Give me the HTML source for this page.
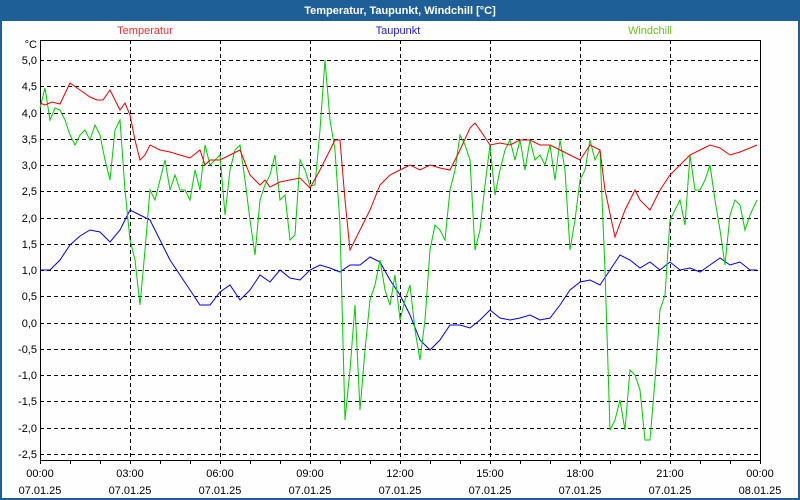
<!DOCTYPE html>
<html><head><meta charset="utf-8"><style>
html,body{margin:0;padding:0;background:#fff;}
svg{display:block;font-family:"Liberation Sans",sans-serif;}
</style></head><body>
<svg width="800" height="500" xmlns="http://www.w3.org/2000/svg">
<rect x="0" y="0" width="800" height="500" fill="#fdfefd"/>
<rect x="0" y="0" width="800" height="21" fill="#1d5f96"/>
<rect x="0" y="0" width="2" height="500" fill="#1d5f96"/>
<rect x="798" y="0" width="2" height="500" fill="#1d5f96"/>
<rect x="0" y="498" width="800" height="2" fill="#1d5f96"/>
<text x="400" y="14" fill="#fff" font-size="11" font-weight="bold" text-anchor="middle">Temperatur, Taupunkt, Windchill [°C]</text>
<text x="145" y="34" fill="#f03030" font-size="11" text-anchor="middle">Temperatur</text>
<text x="398" y="34" fill="#2020d0" font-size="11" text-anchor="middle">Taupunkt</text>
<text x="650" y="34" fill="#70c020" font-size="11" text-anchor="middle">Windchill</text>
<g stroke="#000" stroke-width="1" stroke-dasharray="4,3" fill="none">
<path d="M40 60.5H760M40 86.5H760M40 113.5H760M40 139.5H760M40 165.5H760M40 191.5H760M40 218.5H760M40 244.5H760M40 270.5H760M40 296.5H760M40 323.5H760M40 349.5H760M40 375.5H760M40 401.5H760M40 428.5H760M40 454.5H760"/>
<path d="M130.5 40V460M220.5 40V460M310.5 40V460M400.5 40V460M490.5 40V460M580.5 40V460M670.5 40V460"/>
</g>
<path d="M40.5 40.5H760.5V460.5H40.5Z" fill="none" stroke="#000" stroke-width="1"/>
<path d="M40.5 460V464M70.5 460V464M100.5 460V464M130.5 460V464M160.5 460V464M190.5 460V464M220.5 460V464M250.5 460V464M280.5 460V464M310.5 460V464M340.5 460V464M370.5 460V464M400.5 460V464M430.5 460V464M460.5 460V464M490.5 460V464M520.5 460V464M550.5 460V464M580.5 460V464M610.5 460V464M640.5 460V464M670.5 460V464M700.5 460V464M730.5 460V464M760.5 460V464" stroke="#000"/>
<g font-size="11" fill="#000" text-anchor="end">
<text x="37" y="48">°C</text>
<text x="37" y="64">5,0</text><text x="37" y="90">4,5</text><text x="37" y="117">4,0</text><text x="37" y="143">3,5</text><text x="37" y="169">3,0</text><text x="37" y="195">2,5</text><text x="37" y="222">2,0</text><text x="37" y="248">1,5</text><text x="37" y="274">1,0</text><text x="37" y="300">0,5</text><text x="37" y="327">0,0</text><text x="37" y="353">-0,5</text><text x="37" y="379">-1,0</text><text x="37" y="405">-1,5</text><text x="37" y="432">-2,0</text><text x="37" y="458">-2,5</text>
</g>
<g font-size="11" fill="#000" text-anchor="middle">
<text x="40" y="477">00:00</text><text x="40" y="494">07.01.25</text>
<text x="130" y="477">03:00</text><text x="130" y="494">07.01.25</text>
<text x="220" y="477">06:00</text><text x="220" y="494">07.01.25</text>
<text x="310" y="477">09:00</text><text x="310" y="494">07.01.25</text>
<text x="400" y="477">12:00</text><text x="400" y="494">07.01.25</text>
<text x="490" y="477">15:00</text><text x="490" y="494">07.01.25</text>
<text x="580" y="477">18:00</text><text x="580" y="494">07.01.25</text>
<text x="670" y="477">21:00</text><text x="670" y="494">07.01.25</text>
<text x="760" y="477">00:00</text><text x="760" y="494">08.01.25</text>
</g>
<polyline fill="none" stroke="#0000ee" stroke-width="1" points="40,270 50,270 60,260 70,245 80,236 90,230 100,232 110,242 120,230 130,210 140,215 150,220 160,240 170,260 180,275 190,290 200,305 210,305 220,292 230,285 240,300 250,290 260,275 270,282 280,270 290,278 300,280 310,270 320,265 330,268 340,272 350,265 360,265 370,257 380,262 390,280 400,295 410,315 420,340 430,350 440,340 450,325 460,325 470,328 480,320 490,310 500,318 510,320 520,318 530,315 540,320 550,318 560,305 570,290 580,282 590,280 600,285 610,270 620,255 630,260 640,268 650,262 660,270 670,262 680,270 690,268 700,272 710,265 720,258 730,265 740,262 750,270 757,270"/>
<polyline fill="none" stroke="#00cc00" stroke-width="1" points="40,108 45,88 50,120 55,108 60,110 65,120 70,135 75,145 80,135 85,130 90,140 95,125 100,135 105,160 110,180 115,130 120,120 125,190 130,240 135,260 140,305 145,250 150,190 155,200 160,180 165,160 170,190 175,175 180,190 185,190 190,200 195,170 200,190 205,145 210,165 215,160 220,155 225,215 230,170 235,150 240,145 245,180 250,220 255,255 260,200 265,185 270,175 275,155 280,200 285,195 290,240 295,235 300,160 305,170 310,186 315,185 320,130 325,60 330,120 335,150 340,225 345,420 350,370 355,305 360,410 365,350 370,300 375,285 380,260 385,290 390,305 395,275 400,320 405,300 410,285 415,330 420,360 425,320 430,250 435,225 440,230 445,240 450,190 455,170 460,135 465,145 470,160 475,250 480,230 485,185 490,145 495,195 500,170 505,150 510,140 515,160 520,140 525,170 530,140 535,160 540,155 545,165 550,145 555,180 560,140 565,170 570,250 575,220 580,180 585,170 590,140 595,160 600,150 605,270 610,430 615,420 620,400 625,430 630,370 635,375 640,390 645,440 650,440 655,380 660,310 665,295 670,220 675,210 680,200 685,225 690,155 695,190 700,190 705,180 710,165 715,200 720,230 725,265 730,215 735,200 740,205 745,230 750,215 757,200"/>
<polyline fill="none" stroke="#ee0000" stroke-width="1" points="40,103 45,105 52,102 60,104 70,83 80,90 90,97 97,100 103,100 110,90 120,110 125,103 130,115 135,140 140,160 145,155 150,145 160,150 170,152 180,155 190,158 200,150 205,165 210,160 220,160 230,155 240,150 250,175 260,185 265,180 270,187 280,182 290,180 300,178 310,188 320,170 330,150 335,140 340,140 345,200 350,250 355,240 360,230 370,210 380,185 390,175 400,170 410,165 420,170 430,165 440,168 450,170 460,150 470,128 475,123 480,130 490,145 500,143 510,145 520,140 530,140 540,145 550,145 560,150 570,155 580,160 590,145 600,150 605,190 615,237 625,210 635,190 640,200 645,205 650,210 660,190 670,175 680,165 690,155 700,150 710,145 720,148 730,155 740,152 750,148 757,145"/>
</svg>
</body></html>
